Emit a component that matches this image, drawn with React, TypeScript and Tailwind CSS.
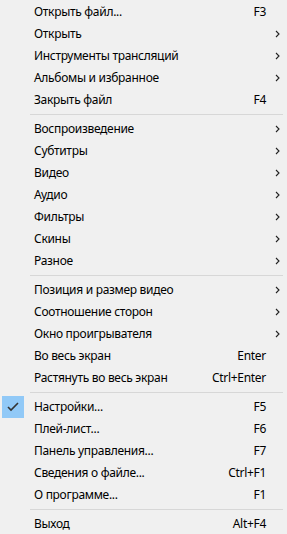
type Item =
  | { sep: true }
  | { sep?: false; label: string; shortcut?: string; sub?: boolean; checked?: boolean };

const items: Item[] = [
  { label: 'Открыть файл...', shortcut: 'F3' },
  { label: 'Открыть', sub: true },
  { label: 'Инструменты трансляций', sub: true },
  { label: 'Альбомы и избранное', sub: true },
  { label: 'Закрыть файл', shortcut: 'F4' },
  { sep: true },
  { label: 'Воспроизведение', sub: true },
  { label: 'Субтитры', sub: true },
  { label: 'Видео', sub: true },
  { label: 'Аудио', sub: true },
  { label: 'Фильтры', sub: true },
  { label: 'Скины', sub: true },
  { label: 'Разное', sub: true },
  { sep: true },
  { label: 'Позиция и размер видео', sub: true },
  { label: 'Соотношение сторон', sub: true },
  { label: 'Окно проигрывателя', sub: true },
  { label: 'Во весь экран', shortcut: 'Enter' },
  { label: 'Растянуть во весь экран', shortcut: 'Ctrl+Enter' },
  { sep: true },
  { label: 'Настройки...', shortcut: 'F5', checked: true },
  { label: 'Плей-лист...', shortcut: 'F6' },
  { label: 'Панель управления...', shortcut: 'F7' },
  { label: 'Сведения о файле...', shortcut: 'Ctrl+F1' },
  { label: 'О программе...', shortcut: 'F1' },
  { sep: true },
  { label: 'Выход', shortcut: 'Alt+F4' },
];

function Chevron() {
  return (
    <svg width="5" height="8" viewBox="0 0 5 8" className="block">
      <path d="M1 1 L4 4 L1 7" fill="none" stroke="#222" strokeWidth="1.1" />
    </svg>
  );
}

function Check() {
  return (
    <svg width="12" height="10" viewBox="0 0 12 10" className="block">
      <path d="M1 5 L4 8 L11 1" fill="none" stroke="#333" strokeWidth="1.6" />
    </svg>
  );
}

export default function App() {
  return (
    <div
      className="w-[287px] h-[534px] overflow-hidden bg-[#f0f0f0] pt-px text-[12px] tracking-[-0.3px] text-black"
      style={{ fontFamily: '"Noto Sans", "Open Sans", sans-serif' }}
    >
      {items.map((item, i) =>
        item.sep ? (
          <div key={i} className="h-[7px] flex items-center pl-[30px] pr-[4px]">
            <div className="h-px w-full bg-[#d7d7d7]" />
          </div>
        ) : (
          <div key={i} className="h-[22px] flex items-center">
            <div className="w-[34px] h-[22px] flex items-center pl-[2px]">
              {item.checked && (
                <div className="w-[22px] h-[22px] bg-[#91c9f7] flex items-center justify-center">
                  <Check />
                </div>
              )}
            </div>
            <span className="flex-1 whitespace-nowrap leading-none">{item.label}</span>
            <span className="whitespace-nowrap leading-none">{item.shortcut}</span>
            <div className="w-[21px] flex justify-center pl-[2px]">{item.sub && <Chevron />}</div>
          </div>
        )
      )}
    </div>
  );
}
